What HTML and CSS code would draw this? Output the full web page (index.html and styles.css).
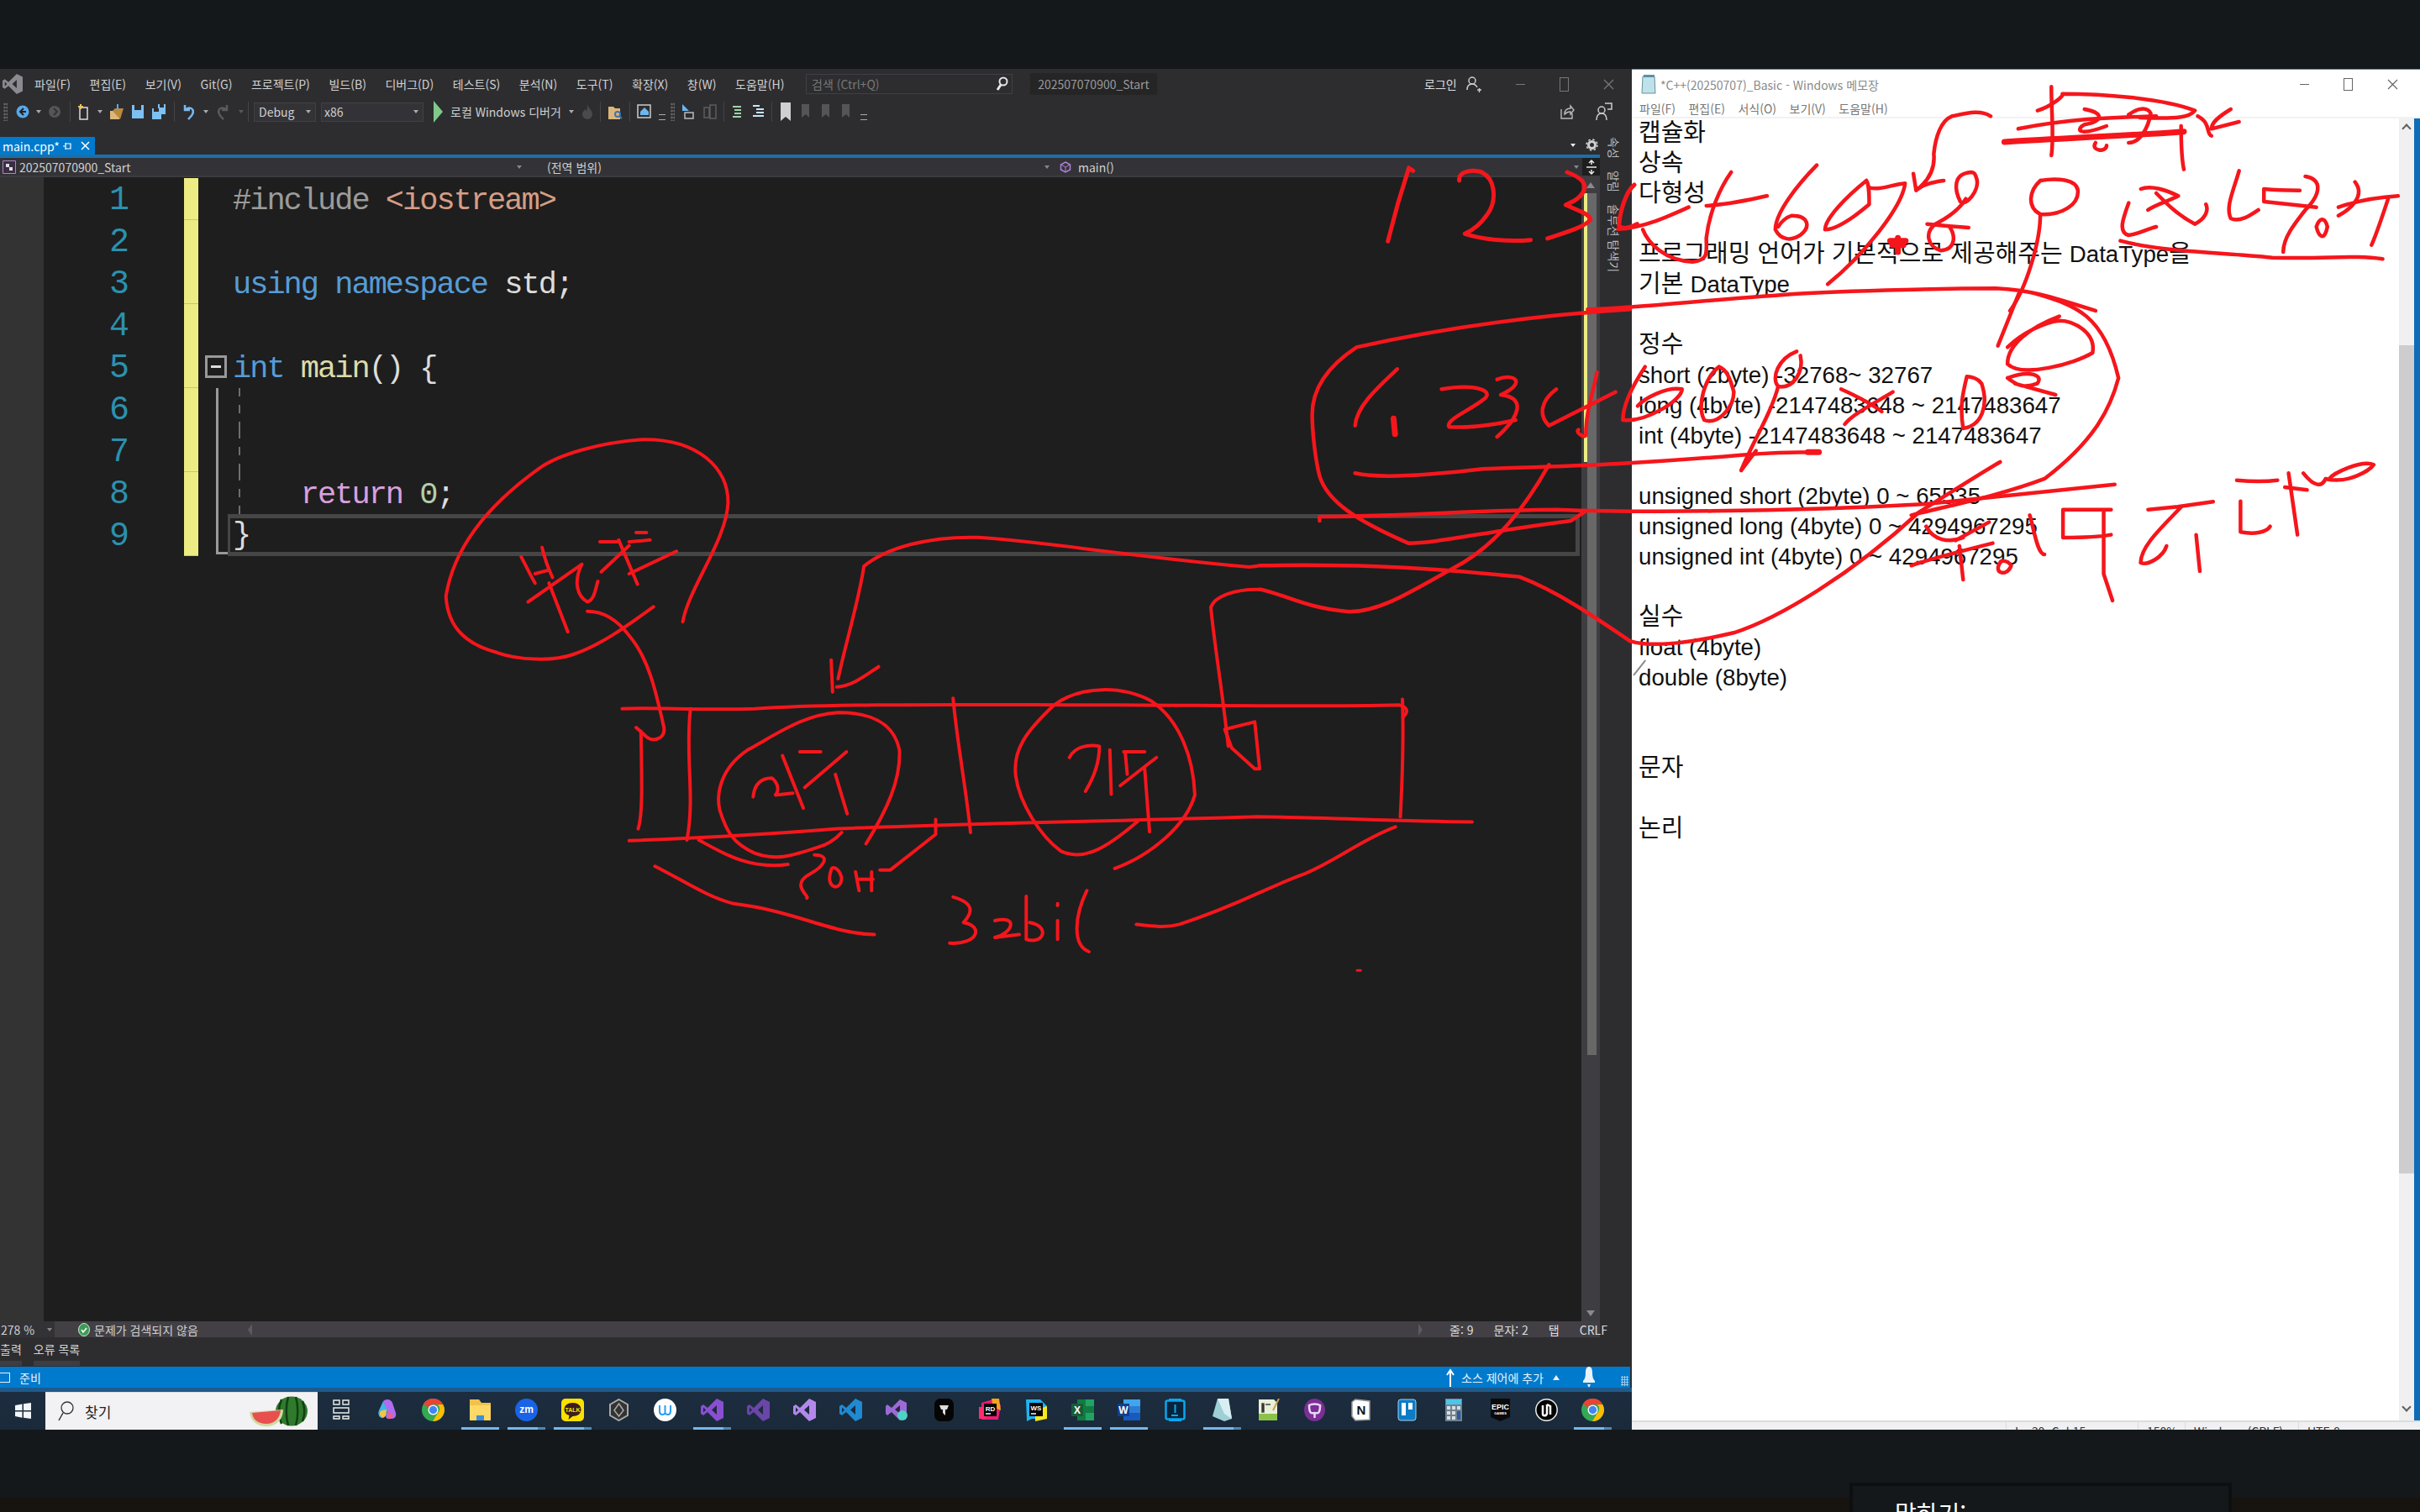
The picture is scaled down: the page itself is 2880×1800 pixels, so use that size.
FILE: index.html
```html
<!DOCTYPE html>
<html lang="ko">
<head>
    <meta charset="UTF-8">
    <title>main.cpp - 202507070900_Start</title>
    <link rel="stylesheet" href="styles.css">
</head>
<body>
    <svg width="0" height="0" class="defs">
        <symbol id="vs-logo" viewBox="0 0 27 27">
            <path d="M19 0 27 4v19l-8 4L8 16l-5 4-3-2V9l3-2 5 4zM19 8l-6 5.500 6 5.500zM3 10.500v6l3-3z" fill="currentColor"/>
        </symbol>
        <symbol id="chrome" viewBox="0 0 27 27">
            <circle cx="13.500" cy="13.500" r="13.500" fill="#34a853"/>
            <path d="M13.500 0A13.500 13.500 0 0 1 25.200 7H13.500a6.500 6.500 0 0 0-6 4L2 6A13.500 13.500 0 0 1 13.500 0" fill="#ea4335"/>
            <path d="M25.200 7A13.500 13.500 0 0 1 13 27l6-10a6.500 6.500 0 0 0 0-10z" fill="#fbbc05"/>
            <circle cx="13.500" cy="13.500" r="6" fill="#fff"/>
            <circle cx="13.500" cy="13.500" r="4.700" fill="#4285f4"/>
        </symbol>
    </svg>

    <div class="desktop">
        <!-- Visual Studio window + taskbar -->
        <div class="vs">
            <div class="vs-title">
                <svg class="vs-icon" width="24" height="24"><use href="#vs-logo"/></svg>
                <nav class="vs-menu">
                    <span>파일(F)</span><span>편집(E)</span><span>보기(V)</span><span>Git(G)</span><span>프로젝트(P)</span><span>빌드(B)</span><span>디버그(D)</span><span>테스트(S)</span><span>분석(N)</span><span>도구(T)</span><span>확장(X)</span><span>창(W)</span><span>도움말(H)</span>
                </nav>
                <div class="vs-search">
                    <span>검색 (Ctrl+Q)</span>
                    <svg width="16" height="18" viewBox="0 0 16 18"><circle cx="10" cy="6" r="4.500" fill="none" stroke="#e6e6e6" stroke-width="2"/><path d="M7 10 3 16" stroke="#e6e6e6" stroke-width="3"/></svg>
                </div>
                <div class="vs-solution">202507070900_Start</div>
                <div class="vs-login">
                    <span>로그인</span>
                    <svg width="18" height="20" viewBox="0 0 18 20"><circle cx="7" cy="6" r="4" fill="none" stroke="#ccc" stroke-width="1.500"/><path d="M1 17c0-4 2-7 6-7s5 2 6 4M13 17h5M15.500 15v5" fill="none" stroke="#ccc" stroke-width="1.500"/></svg>
                </div>
                <div class="win-buttons">
                    <span class="win-min"></span><span class="win-max"></span>
                    <svg width="13" height="13" viewBox="0 0 13 13"><path d="M1 1l11 11M12 1 1 12" stroke="#777" stroke-width="1.300"/></svg>
                </div>
            </div>

            <div class="vs-toolbar">
                <span class="grip"></span>
                <div class="tb-group nav-group">
                    <svg width="16" height="16" viewBox="0 0 16 16"><circle cx="8" cy="8" r="7.500" fill="#58a9e8"/><path d="M9 4 5 8l4 4M5 8h7" stroke="#222" stroke-width="2" fill="none"/></svg>
                    <i class="caret"></i>
                    <svg width="16" height="16" viewBox="0 0 16 16"><circle cx="8" cy="8" r="7" fill="#555"/><path d="M7 4l4 4-4 4" stroke="#333" stroke-width="2" fill="none"/></svg>
                </div>
                <span class="tb-sep"></span>
                <div class="tb-group file-group">
                    <svg width="16" height="20" viewBox="0 0 16 20"><path d="M3 5h9v14H3z" fill="none" stroke="#ddd" stroke-width="1.500"/><path d="M4 1v6M1 4h6" stroke="#e8c26a" stroke-width="2"/></svg>
                    <i class="caret"></i>
                    <svg width="18" height="20" viewBox="0 0 18 20"><path d="M1 9h11v10H1z" fill="#dcb67a"/><path d="M4 9l3-3h10l-4 13" fill="#b98a3e"/><path d="M10 7V1" stroke="#58a9e8" stroke-width="2"/></svg>
                    <svg width="16" height="18" viewBox="0 0 16 18"><path d="M1 1h14v16H1z" fill="#7dc0f2"/><path d="M4 1h8v6H4z" fill="#2d2d30"/></svg>
                    <svg width="18" height="20" viewBox="0 0 18 20"><path d="M1 6h11v13H1z" fill="#7dc0f2"/><path d="M8 1h9v12H8z" fill="#7dc0f2"/><path d="M10 1h5v4h-5zM3 6h6v4H3z" fill="#2d2d30"/></svg>
                </div>
                <span class="tb-sep"></span>
                <div class="tb-group undo-group">
                    <svg width="18" height="20" viewBox="0 0 18 20"><path d="M5 2v6h6M5 8c5-5 12-2 9 5-1 2-3 4-5 6" fill="none" stroke="#78b8ef" stroke-width="2.500"/></svg>
                    <i class="caret"></i>
                    <svg width="18" height="20" viewBox="0 0 18 20"><path d="M13 2v6H7M13 8C8 3 1 6 4 13c1 2 3 4 5 6" fill="none" stroke="#5a5a5c" stroke-width="2.500"/></svg>
                    <i class="caret dim"></i>
                </div>
                <span class="tb-sep"></span>
                <div class="combo combo-debug"><span>Debug</span><i class="caret"></i></div>
                <div class="combo combo-x86"><span>x86</span><i class="caret"></i></div>
                <div class="tb-group run-group">
                    <svg width="11" height="26" viewBox="0 0 11 26"><path d="M0 0 11 13 0 26z" fill="#7fc98a"/></svg>
                    <span class="run-label">로컬 Windows 디버거</span>
                    <i class="caret"></i>
                    <svg width="14" height="20" viewBox="0 0 14 20"><path d="M7 1c1 5 6 7 6 12a6 6 0 0 1-12 0c0-3 2-4 3-6 1 1 1 2 2 2 1-2 1-5 1-8" fill="#4a4a4c"/></svg>
                </div>
                <span class="tb-sep"></span>
                <div class="tb-group find-group">
                    <svg width="18" height="20" viewBox="0 0 18 20"><path d="M1 4h6l2 2h6v13H1z" fill="#dcb67a"/><circle cx="12" cy="13" r="3" fill="none" stroke="#3a76b0" stroke-width="2"/><path d="M14 15l3 3" stroke="#3a76b0" stroke-width="2"/></svg>
                </div>
                <span class="tb-sep"></span>
                <div class="tb-group home-group">
                    <svg width="18" height="20" viewBox="0 0 18 20"><path d="M1 2h15v15H1z" fill="none" stroke="#ccc" stroke-width="1.500"/><path d="M4 10l5-5 5 5v4H4z" fill="#6db5ee"/></svg>
                    <i class="lines"></i>
                </div>
                <span class="grip"></span>
                <div class="tb-group comment-group">
                    <svg width="16" height="20" viewBox="0 0 16 20"><path d="M1 1l8 8H1z" fill="#6db5ee"/><path d="M4 11h10v7H4z" fill="none" stroke="#bbb" stroke-width="1.500"/></svg>
                    <svg width="16" height="20" viewBox="0 0 16 20"><path d="M1 5h6v12H1zM8 2h7v16H8z" fill="none" stroke="#5c5c5e" stroke-width="1.500"/></svg>
                </div>
                <span class="tb-sep"></span>
                <div class="tb-group comment-group">
                    <svg width="14" height="18" viewBox="0 0 14 18"><path d="M2 3h10M4 7h8M4 11h8M2 15h10" stroke="#9fd3a8" stroke-width="2"/></svg>
                    <svg width="16" height="20" viewBox="0 0 16 20"><path d="M2 3h8M6 7h9M6 11h9M2 15h13" stroke="#c6e4f7" stroke-width="2"/></svg>
                </div>
                <span class="tb-sep"></span>
                <div class="tb-group bookmark-group">
                    <svg width="14" height="22" viewBox="0 0 14 22"><path d="M1 0h12v22l-6-5-6 5z" fill="#cfcfcf"/></svg>
                    <svg width="14" height="20" viewBox="0 0 14 20"><path d="M2 1h9v16l-4-4-5 4z" fill="#555"/></svg>
                    <svg width="14" height="20" viewBox="0 0 14 20"><path d="M2 1h9v16l-4-4-5 4z" fill="#555"/></svg>
                    <svg width="14" height="20" viewBox="0 0 14 20"><path d="M2 1h9v16l-4-4-5 4z" fill="#555"/></svg>
                    <i class="lines"></i>
                </div>
                <div class="tb-right">
                    <svg width="18" height="20" viewBox="0 0 18 20"><path d="M2 7v11h13v-6M6 13c0-5 3-7 7-7V3l4 5-4 5v-3c-3 0-5 1-7 3z" fill="none" stroke="#bbb" stroke-width="1.400"/></svg>
                    <svg width="20" height="22" viewBox="0 0 20 22"><circle cx="7" cy="9" r="4" fill="none" stroke="#ccc" stroke-width="1.500"/><path d="M1 21c0-5 2-8 6-8s6 3 6 8M11 1h8v7h-5" fill="none" stroke="#ccc" stroke-width="1.500"/></svg>
                </div>
            </div>

            <div class="workspace">
                <div class="docwell">
                    <div class="tabstrip">
                        <div class="doc-tab">
                            <span>main.cpp*</span>
                            <svg width="10" height="10" viewBox="0 0 10 10"><path d="M0 5h3M3 1v8M3 2h6v6H3" fill="none" stroke="#fff" stroke-width="1.200"/></svg>
                            <svg width="11" height="11" viewBox="0 0 11 11"><path d="M1 1l9 9M10 1l-9 9" stroke="#fff" stroke-width="1.500"/></svg>
                        </div>
                        <div class="tab-tools">
                            <i class="caret bright"></i>
                            <svg width="15" height="15" viewBox="0 0 15 15"><circle cx="7.500" cy="7.500" r="4" fill="none" stroke="#d0d0d0" stroke-width="3"/><circle cx="7.500" cy="7.500" r="6.500" fill="none" stroke="#d0d0d0" stroke-width="1.500" stroke-dasharray="2.500 2.600"/></svg>
                        </div>
                    </div>
                    <div class="tab-line"></div>
                    <div class="navbar">
                        <div class="nav-combo nav-project">
                            <svg width="16" height="16" viewBox="0 0 16 16"><path d="M.5.5h15v15H.5z" fill="#3b2b44" stroke="#a988c0"/><path d="M4 4h4v4H4zM8 8h4v4H8z" fill="#ddd"/></svg>
                            <span>202507070900_Start</span><i class="caret small"></i>
                        </div>
                        <div class="nav-combo nav-scope"><span>(전역 범위)</span><i class="caret small"></i></div>
                        <div class="nav-combo nav-member">
                            <svg width="14" height="14" viewBox="0 0 14 14"><path d="M7 1l5.500 3v6L7 13l-5.500-3V4z" fill="none" stroke="#b180d7" stroke-width="1.500"/><path d="M2 4l5 3 5-3M7 7v6" fill="none" stroke="#b180d7"/></svg>
                            <span>main()</span><i class="caret small"></i>
                        </div>
                        <div class="splitter"><svg width="14" height="18" viewBox="0 0 14 18"><path d="M1 9h12M7 1v5M7 12v5M4 4l3-3 3 3M4 14l3 3 3-3" fill="none" stroke="#e6e6e6" stroke-width="1.500"/></svg></div>
                    </div>

                    <div class="editor">
                        <div class="margin"></div>
                        <div class="code">
                            <div class="row"><span class="num">1</span><span class="mark"></span><span class="fold"></span><pre class="text"><span class="c-dir">#include</span> <span class="c-str">&lt;iostream&gt;</span></pre></div>
                            <div class="row"><span class="num">2</span><span class="mark even"></span><span class="fold"></span><pre class="text"></pre></div>
                            <div class="row"><span class="num">3</span><span class="mark"></span><span class="fold"></span><pre class="text"><span class="c-key">using namespace</span> std;</pre></div>
                            <div class="row"><span class="num">4</span><span class="mark even"></span><span class="fold"></span><pre class="text"></pre></div>
                            <div class="row"><span class="num">5</span><span class="mark"></span><span class="fold"><i class="fold-box"></i></span><pre class="text"><span class="c-key">int</span> <span class="c-fn">main</span>() {</pre></div>
                            <div class="row"><span class="num">6</span><span class="mark even"></span><span class="fold fold-line"></span><pre class="text guide"></pre></div>
                            <div class="row"><span class="num">7</span><span class="mark"></span><span class="fold fold-line"></span><pre class="text guide"></pre></div>
                            <div class="row"><span class="num">8</span><span class="mark even"></span><span class="fold fold-line"></span><pre class="text guide">    <span class="c-ret">return</span> <span class="c-num">0</span>;</pre></div>
                            <div class="row"><span class="num">9</span><span class="mark"></span><span class="fold fold-end"></span><pre class="text current">}</pre></div>
                        </div>
                        <div class="scrollbar">
                            <i class="arrow-up"></i>
                            <div class="scroll-track"><div class="scroll-changes"></div><div class="scroll-thumb"></div></div>
                            <i class="arrow-down"></i>
                        </div>
                    </div>

                    <div class="editor-status">
                        <div class="zoom-box"><span>278 %</span><i class="caret bright small"></i></div>
                        <svg width="14" height="16" viewBox="0 0 14 16"><ellipse cx="7" cy="8" rx="6.500" ry="7.500" fill="#3d9a55" stroke="#cfe7d4"/><path d="M4 8l2 3 4-5" fill="none" stroke="#fff" stroke-width="1.600"/></svg>
                        <span class="no-issues">문제가 검색되지 않음</span>
                        <i class="arrow-left"></i>
                        <i class="arrow-right"></i>
                        <div class="caret-info"><span>줄: 9</span><span>문자: 2</span><span>탭</span><span>CRLF</span></div>
                    </div>
                    <div class="bottom-tabs"><span>출력</span><span>오류 목록</span></div>
                </div>
                <div class="sidetabs"><span>속성</span><span>알림</span><span>솔루션 탐색기</span></div>
            </div>

            <div class="statusbar">
                <i class="ready-box"></i><span class="ready">준비</span>
                <div class="status-right">
                    <svg width="10" height="22" viewBox="0 0 10 22"><path d="M5 22V3M1 8l4-6 4 6" fill="none" stroke="#fff" stroke-width="2"/></svg>
                    <span>소스 제어에 추가</span>
                    <i class="caret-up"></i>
                    <svg class="bell" width="16" height="26" viewBox="0 0 16 26"><path d="M8 0c3 0 4 3 4 7 0 5 1 8 3 10v2H1v-2c2-2 3-5 3-10 0-4 1-7 4-7zM6 21h4l-2 4z" fill="#e8f2fa"/></svg>
                    <i class="resize-grip"></i>
                </div>
            </div>
            <div class="status-strip"></div>

            <div class="taskbar">
                <svg class="start" width="19" height="19" viewBox="0 0 19 19"><path d="M0 3l8.500-1.500V9H0zM10 1.200 19 0v9h-9zM0 10.500h8.500v7.200L0 16zM10 10.500h9V19l-9-1.300z" fill="#f2f6fa"/></svg>
                <div class="search-box">
                    <svg width="20" height="26" viewBox="0 0 20 26"><circle cx="12" cy="9" r="7" fill="none" stroke="#333" stroke-width="1.300"/><path d="M7 15 2 24" stroke="#333" stroke-width="1.500"/></svg>
                    <span>찾기</span>
                    <svg class="melon" width="70" height="36" viewBox="0 0 70 36">
                        <ellipse cx="50" cy="18" rx="19" ry="17.500" fill="#2f7a2c"/>
                        <path d="M38 4c-4 10-4 20 0 29M46 1c-3 10-3 24 0 34M55 1c3 10 3 24 0 34M63 6c3 8 3 16 0 24" fill="none" stroke="#123f14" stroke-width="2.500"/>
                        <path d="M0 19 40 16c0 12-8 20-20 20C8 36 1 29 0 19z" fill="#cfd9a0"/>
                        <path d="M3 20 37 17c-1 10-8 16-17 16C10 33 4 28 3 20z" fill="#e8504f"/>
                    </svg>
                </div>
                <div class="task-icons">
                    <span class="task-icon"><svg width="20" height="24" viewBox="0 0 20 24"><path d="M1 1h7v5H1zM12 1h7v5h-7zM1 10h18v6H1zM1 20h7v3H1zM12 20h7v3h-7z" fill="none" stroke="#eee" stroke-width="1.400"/></svg></span>
                    <span class="task-icon"><svg width="27" height="27" viewBox="0 0 27 27"><path d="M9 3c3-3 9-3 11 2l4 12c1 4-1 7-5 7h-4c-4 0-3-6-1-8z" fill="#b06cf0"/><path d="M9 3 4 14c-2 5 1 10 5 9 3-1 4-5 5-9z" fill="#3fb6e8"/><path d="M5 16c2-2 5-3 8-2l-1 6c-1 3-6 3-7-1z" fill="#f6c344"/><path d="M15 16l5 2c1 4-1 7-5 6z" fill="#ee5f8a"/></svg></span>
                    <span class="task-icon"><svg width="27" height="27"><use href="#chrome"/></svg></span>
                    <span class="task-icon open"><svg width="27" height="27" viewBox="0 0 27 27"><path d="M1 1h11l3 4h11v21H1z" fill="#f3c14b"/><path d="M1 8h25v18H1z" fill="#ffd966"/><path d="M9 26v-6h9v6z" fill="#3d8fdb"/></svg></span>
                    <span class="task-icon open part"><svg width="27" height="27" viewBox="0 0 27 27"><ellipse cx="13.500" cy="13.500" rx="13.500" ry="13.500" fill="#1a63e8"/><text x="13.500" y="17" class="ico-txt" font-size="12" fill="#fff">zm</text></svg></span>
                    <span class="task-icon open part"><svg width="27" height="27" viewBox="0 0 27 27"><rect width="27" height="27" rx="5" fill="#fae100"/><path d="M13.500 5c6 0 10 3 10 8s-4 8-10 8l-5 4 1-5c-4-1-6-4-6-7 0-5 4-8 10-8z" fill="#3c1e1e"/><text x="13.500" y="16" class="ico-txt" font-size="7" fill="#fae100">TALK</text></svg></span>
                    <span class="task-icon"><svg width="27" height="27" viewBox="0 0 27 27"><path d="M13.500 1 24 7v13l-10.500 6L3 20V7z" fill="#333" stroke="#aaa" stroke-width="2"/><path d="M13.500 6 19 14l-5.500 7L8 14z" fill="none" stroke="#aaa" stroke-width="1.500"/></svg></span>
                    <span class="task-icon"><svg width="27" height="27" viewBox="0 0 27 27"><circle cx="13.500" cy="13.500" r="13.500" fill="#fff"/><path d="M7 8v7c0 5 5 5 6.500 2 1.500 3 6.500 3 6.500-2V8M13.500 8v8" fill="none" stroke="#2a9df4" stroke-width="2"/></svg></span>
                    <span class="task-icon open part vs-purple"><svg width="27" height="27"><use href="#vs-logo"/></svg></span>
                    <span class="task-icon vs-dark"><svg width="27" height="27"><use href="#vs-logo"/></svg></span>
                    <span class="task-icon vs-light"><svg width="27" height="27"><use href="#vs-logo"/></svg></span>
                    <span class="task-icon vs-blue"><svg width="27" height="27"><use href="#vs-logo"/></svg></span>
                    <span class="task-icon"><svg width="27" height="27" viewBox="0 0 27 27"><path d="M17 1l8 4v17l-8 4-10-10-5 4-2-2V9l2-2 5 4z" fill="#9c6ad6"/><path d="M17 8l-6 5 6 5z" fill="#2d2240"/><circle cx="20" cy="20" r="6" fill="#4fd1c5"/></svg></span>
                    <span class="task-icon"><svg width="23" height="27" viewBox="0 0 23 27"><rect width="23" height="27" rx="7" fill="#050505"/><path d="M6 8h11l-2 5h-2v7l-3-3v-4H8z" fill="#ddd"/></svg></span>
                    <span class="task-icon"><svg width="27" height="27" viewBox="0 0 27 27"><path d="M3 5 20 0l6 8-3 17H3z" fill="#ec1c75"/><path d="M15 0h9l2 14-9-4z" fill="#f7a41c"/><path d="M0 10h8v14H0z" fill="#ff2d6f"/><rect x="6" y="6" width="15" height="15" fill="#000"/><text x="13.500" y="15" class="ico-txt" font-size="8" fill="#fff">RD</text><path d="M8 18h6" stroke="#fff" stroke-width="1.500"/></svg></span>
                    <span class="task-icon"><svg width="27" height="27" viewBox="0 0 27 27"><path d="M1 1h17l8 8v15H8L2 27z" fill="#1eb4f0"/><path d="M12 14 26 9v15l-14 3z" fill="#f7e81c"/><rect x="5" y="5" width="16" height="16" fill="#000"/><text x="13" y="14" class="ico-txt" font-size="8" fill="#fff">WS</text><path d="M7 18h6" stroke="#fff" stroke-width="1.500"/></svg></span>
                    <span class="task-icon open"><svg width="27" height="27" viewBox="0 0 27 27"><path d="M7 1h20v25H7z" fill="#107c41"/><path d="M17 1h10v8H17zM17 17h10v9H17z" fill="#21a366"/><rect y="6" width="14" height="15" fill="#185c37"/><text x="7" y="18" class="ico-txt" font-size="12" fill="#fff">X</text></svg></span>
                    <span class="task-icon open"><svg width="27" height="27" viewBox="0 0 27 27"><path d="M7 1h20v25H7z" fill="#185abd"/><path d="M7 1h20v8H7z" fill="#41a5ee"/><path d="M7 9h20v8H7z" fill="#2b7cd3"/><rect y="6" width="14" height="15" fill="#103f91"/><text x="7" y="18" class="ico-txt" font-size="12" fill="#fff">W</text></svg></span>
                    <span class="task-icon"><svg width="25" height="27" viewBox="0 0 25 27"><rect x="1.500" y="2.500" width="22" height="22" rx="2" fill="#06243a" stroke="#0ca5ee" stroke-width="2.500"/><path d="M5 0h15v2H5zM5 25h15v2H5z" fill="#0ca5ee"/><path d="M12.500 7v10M8 20h8" stroke="#0ca5ee" stroke-width="2"/></svg></span>
                    <span class="task-icon open part"><svg width="27" height="27" viewBox="0 0 27 27"><path d="M8 0h13l4 24-9 3-14-6z" fill="#9fcfd6"/><path d="M8 0h13l4 24-9-6z" fill="#d9eef2"/></svg></span>
                    <span class="task-icon"><svg width="27" height="27" viewBox="0 0 27 27"><path d="M2 1h18l4 4v21H2z" fill="#e9f0d8"/><path d="M2 18h22v8H2z" fill="#8bc34a"/><path d="M6 6h2v10H6zM10 7h6" stroke="#444" stroke-width="1.500"/><path d="M26 0 19 14" stroke="#c9a24c" stroke-width="2"/></svg></span>
                    <span class="task-icon"><svg width="25" height="27" viewBox="0 0 25 27"><ellipse cx="12.500" cy="13.500" rx="12.500" ry="13.500" fill="#7b2e96"/><path d="M6 8c0 12 4 9 6.500 9S19 20 19 8c-3-2-10-2-13 0zM12.500 17v6" fill="none" stroke="#e9d8f2" stroke-width="2.500"/></svg></span>
                    <span class="task-icon"><svg width="23" height="27" viewBox="0 0 23 27"><path d="M5 1 22 3v22L5 26 1 21V4z" fill="#fff" stroke="#999" stroke-width="1.500"/><text x="12" y="19" class="ico-txt" font-size="15" fill="#111">N</text></svg></span>
                    <span class="task-icon"><svg width="23" height="27" viewBox="0 0 23 27"><rect x="1" y="1" width="21" height="25" rx="3" fill="#0c7cc4" stroke="#9fd1ef"/><path d="M5 5h5v15H5zM13 5h5v8h-5z" fill="#fff"/></svg></span>
                    <span class="task-icon"><svg width="20" height="27" viewBox="0 0 20 27"><rect width="20" height="27" fill="#71818f"/><rect x="1" y="1" width="18" height="6" fill="#4fc3e8"/><path d="M2 9h4v4H2zM8 9h4v4H8zM14 9h4v4h-4zM2 15h4v4H2zM8 15h4v4H8zM2 21h4v4H2zM8 21h4v4H8z" fill="#d8dee3"/><path d="M14 15h4v10h-4z" fill="#2a5b9c"/></svg></span>
                    <span class="task-icon"><svg width="23" height="27" viewBox="0 0 23 27"><path d="M0 0h23v22l-11.500 5L0 22z" fill="#0a0a0a"/><text x="11.500" y="13" class="ico-txt" font-size="9" fill="#fff">EPIC</text><text x="11.500" y="19" class="ico-txt" font-size="4" fill="#fff">GAMES</text></svg></span>
                    <span class="task-icon"><svg width="27" height="27" viewBox="0 0 27 27"><circle cx="13.500" cy="13.500" r="12.700" fill="#000" stroke="#eee" stroke-width="1.500"/><path d="M9 8v10c0 3 4 3 5 0V7M14 7l4 2v10" fill="none" stroke="#fff" stroke-width="2.500"/></svg></span>
                    <span class="task-icon open part"><svg width="27" height="27"><use href="#chrome"/></svg></span>
                </div>
            </div>
        </div>

        <!-- Notepad -->
        <div class="notepad">
            <div class="np-title">
                <svg width="20" height="26" viewBox="0 0 20 26"><path d="M3 3h14l1 20H2z" fill="#bfe1ea" stroke="#6a8f99"/><path d="M4 1h13v3H4z" fill="#5c8fa8"/></svg>
                <span class="np-name">*C++(20250707)_Basic - Windows 메모장</span>
                <div class="np-buttons">
                    <span class="np-min"></span><span class="np-max"></span>
                    <svg width="13" height="13" viewBox="0 0 13 13"><path d="M1 1l11 11M12 1 1 12" stroke="#666" stroke-width="1.200"/></svg>
                </div>
            </div>
            <nav class="np-menu"><span>파일(F)</span><span>편집(E)</span><span>서식(O)</span><span>보기(V)</span><span>도움말(H)</span></nav>
            <div class="np-body">
                <pre class="np-text"><span class="ko">캡슐화</span>
<span class="ko">상속</span>
<span class="ko">다형성</span>

<span class="ko">프로그래밍 언어가 기본적으로 제공해주는 </span>DataType<span class="ko">을</span>
<span class="ko">기본 </span>DataType

<span class="ko">정수</span>
short (2byte) -32768~ 32767
long (4byte) -2147483648 ~ 2147483647
int (4byte) -2147483648 ~ 2147483647

unsigned short (2byte) 0 ~ 65535
unsigned long (4byte) 0 ~ 4294967295
unsigned int (4byte) 0 ~ 4294967295

<span class="ko">실수</span>
float (4byte)
double (8byte)


<span class="ko">문자</span>

<span class="ko">논리</span></pre>
                <div class="np-scroll">
                    <i class="np-up"></i>
                    <div class="np-thumb"></div>
                    <i class="np-down"></i>
                </div>
                <div class="np-edge"></div>
            </div>
            <div class="np-status"><span class="np-pos">Ln 29, Col 15</span><span class="np-zoom">150%</span><span class="np-eol">Windows (CRLF)</span><span class="np-enc">UTF-8</span></div>
        </div>
    </div>

    <div class="caption-area">
        <div class="speak-box">말하기:</div>
    </div>

    <!-- red pen annotations over the screen -->
    <svg class="ink" width="2880" height="1800" viewBox="0 0 2880 1800">
        <g class="pen-wide" transform="translate(1620 170) scale(.3333)">
            <path d="M185 100 170 90 130 220 95 352"/>
            <path d="M350 135C345 100 400 95 430 105 480 130 480 200 460 240 430 290 400 310 370 325 430 345 530 355 605 347"/>
            <path d="M735 105C790 125 810 150 790 180 770 210 740 215 730 222 770 240 820 255 818 275 800 300 730 320 665 342"/>
            <path d="M975 150C945 175 925 240 920 295 930 310 960 305 985 290"/>
        </g>
        <g class="pen-mid" transform="translate(1850 70) scale(.657 .3333)">
            <path d="M115 608C160 605 210 560 243 530"/>
            <path d="M160 610C170 660 200 720 250 725 280 720 275 690 275 640 280 550 300 460 320 405"/>
            <path d="M275 525C320 520 360 500 385 490"/>
            <path d="M475 380C440 450 400 550 400 610 410 650 430 650 445 630 465 600 460 560 430 560 420 565 410 585 405 600"/>
            <path d="M565 435C530 490 490 570 490 610 510 610 540 570 570 520 570 480 570 450 565 435"/>
            <path d="M570 460C590 470 610 450 635 445 630 530 560 700 495 805"/>
            <path d="M790 205C770 180 745 195 720 205 700 220 690 280 687 340 690 400 675 440 655 470L650 410M655 470C670 445 690 440 705 435"/>
            <path d="M755 405C720 410 725 470 735 510 745 530 770 470 765 430 762 410 760 405 755 405"/>
            <path d="M745 500C730 550 700 580 690 590 670 620 675 670 700 685 730 680 725 620 715 600M675 590C700 595 730 600 750 603"/>
            <path d="M880 435C860 470 855 530 880 555 920 560 950 520 948 470 945 430 910 425 880 435"/>
            <path d="M880 555C880 650 855 820 825 900"/>
            <path class="thick" d="M622 640 622 690M608 650 636 650M612 665 632 665"/>
            <path d="M1062 465C1080 450 1110 470 1130 490 1110 510 1090 520 1075 540"/>
            <path d="M1040 515C1030 570 1020 620 1040 630 1060 625 1070 610 1090 600"/>
            <path d="M1090 480C1110 520 1130 560 1160 590 1180 570 1185 540 1180 520"/>
            <path d="M1240 400C1230 470 1215 530 1225 570 1240 585 1260 560 1275 540"/>
            <path d="M1285 465C1310 470 1330 470 1350 470M1285 465 1285 510 1380 530"/>
            <path d="M1360 420C1390 430 1390 480 1360 540 1340 590 1320 640 1320 690"/>
            <path d="M1380 600C1385 640 1395 650 1400 600 1395 560 1385 570 1380 600"/>
            <path d="M1450 440C1470 490 1440 540 1420 560M1420 530C1450 510 1490 495 1528 490M1510 500C1500 560 1490 620 1480 665"/>
            <path d="M1025 650C1100 690 1200 690 1300 710 1400 715 1450 700 1500 715"/>
            <path d="M900 100C900 200 905 280 900 345"/>
            <path d="M875 185C900 170 925 130 920 125 990 125 1100 140 1160 185 1150 210 1130 215 1060 210"/>
            <path d="M960 180C990 190 1000 220 960 235 945 250 945 280 1000 240"/>
            <path class="thick" d="M815 297C900 285 1000 280 1140 260"/>
            <path d="M840 250C930 215 1000 210 1090 205"/>
            <path d="M1040 200C1060 170 1075 175 1080 195 1075 250 1060 300 1040 300"/>
            <path d="M1165 205C1190 230 1180 270 1190 275M1225 180C1200 210 1190 230 1190 250L1240 225"/>
            <path d="M1135 240C1135 300 1135 350 1140 395"/>
            <path d="M980 300C970 330 1000 335 1000 310"/>
            <path d="M60 895C150 890 280 860 400 845 500 830 700 820 800 820 860 825 900 850 980 900"/>
        </g>
        <g class="pen-mid" transform="translate(1500 350) scale(.8803 .3333)">
            <path d="M185 268C160 330 130 400 128 470"/>
            <path class="thick" d="M180 445 182 500"/>
            <path d="M245 340C290 320 320 345 300 380 280 420 250 450 255 475 290 480 320 465 345 450"/>
            <path d="M320 305C345 280 360 320 325 360 360 370 350 440 320 510"/>
            <path d="M400 340C380 380 375 430 390 470L480 350M455 280C450 350 440 420 440 500 440 520 425 495 430 485"/>
            <path d="M520 260C500 340 490 400 490 450 520 460 570 380 570 340 550 330 520 370 510 400"/>
            <path d="M620 260C600 300 590 400 600 450 620 470 640 400 640 350 635 300 630 270 620 260"/>
            <path d="M725 205C700 230 690 300 700 330 720 340 735 280 730 220"/>
            <path d="M700 330C690 430 665 530 650 630"/>
            <path d="M785 340C810 370 830 400 840 420M855 350C830 390 800 430 790 465"/>
            <path d="M955 295C950 350 945 400 950 480 975 470 985 400 975 320 970 300 960 295 955 295"/>
            <path d="M1025 0 997 185"/>
            <path d="M1080 80C1040 120 1010 180 1010 250 1030 300 1100 250 1125 210 1130 140 1100 95 1080 95 1060 100 1030 140 1010 190"/>
            <path d="M1010 300C1040 270 1060 290 1050 320 1030 340 1020 320 1010 300M1020 320 1075 360"/>
            <path d="M128 640C160 660 220 650 300 625 400 615 500 610 650 575 700 565 730 565 755 565"/>
            <path class="thick" d="M740 565 755 565"/>
            <path d="M650 630 670 560"/>
            <path d="M500 55C440 65 300 90 130 190 90 260 70 340 70 430 70 500 75 600 80 650 90 740 130 810 200 890 240 890 300 850 420 810L440 775"/>
            <path d="M1050 0C1100 40 1140 70 1160 300 1150 400 1130 520 1060 660 1000 720 940 750 880 790"/>
            <path d="M80 810V795C200 795 300 770 400 770 500 780 700 780 900 750L1155 680"/>
            <path d="M0 970C100 965 200 970 350 1010 400 1060 450 1150 500 1240 520 1255 560 1260 640 1210 700 1160 800 1000 890 780 950 680 980 630 1000 600"/>
            <path d="M390 610C360 750 320 900 260 980 200 1070 160 1135 120 1135 60 1120 40 1080 0 1055"/>
            <path d="M900 830C910 880 930 890 950 870M985 815 940 880M880 970C900 950 930 930 990 890M945 900 950 1020"/>
            <path d="M1000 960C990 1000 1010 1010 1015 970 1010 950 1000 950 1000 960"/>
            <path d="M1040 790C1045 830 1050 930 1060 930M1085 770V870C1100 870 1130 870 1150 860M1085 770H1150M1140 770V1000L1152 1095"/>
            <path d="M1200 770 1240 760 1288 742M1245 760C1220 830 1190 900 1190 960 1200 970 1220 940 1225 900M1265 860 1270 990"/>
            <path d="M1320 665C1340 670 1360 670 1375 665M1325 740V850C1345 860 1360 850 1365 830"/>
            <path d="M1390 640 1402 860M1385 690 1415 700"/>
            <path d="M1410 640C1425 690 1435 690 1440 660 1470 680 1500 630 1505 610 1490 590 1450 640 1445 660"/>
            <path class="pencil" d="M520 1310 505 1360"/>
        </g>
        <g transform="translate(500 500) scale(.8291 .4464)">
            <path d="M377 538C385 450 440 320 442 220 442 130 400 50 320 52 260 60 200 90 170 130 110 210 50 320 37 470 40 560 70 600 110 620 140 640 190 645 220 625 260 600 300 545 335 498"/>
            <path d="M145 365C155 400 160 420 165 435M175 340C180 380 185 400 190 420M165 410 185 400M155 485 232 385M185 435 212 565"/>
            <path d="M232 385C220 430 225 470 240 485 250 480 252 450 255 430M258 325H285M260 405 300 335M285 320 312 438M310 300H325M330 320 300 325M300 410 368 350"/>
            <path d="M240 510C270 510 290 550 300 575 330 640 340 740 350 820 352 850 335 860 325 845L310 820"/>
            <path d="M290 770C330 765 400 775 480 770 600 755 800 760 1000 760 1200 762 1300 765 1405 760 1415 765 1420 775 1412 790"/>
            <path d="M300 1122C400 1115 500 1105 600 1090 800 1075 1100 1065 1200 1058 1300 1060 1400 1070 1510 1072"/>
            <path d="M317 830C318 950 320 1050 313 1090M388 770C380 900 395 1000 383 1120M765 742C770 850 785 1000 790 1100M1410 745C1412 850 1410 950 1407 1058"/>
            <path d="M640 1130C670 1040 690 960 688 880 680 810 650 780 600 780 550 785 510 840 470 880 430 930 425 1000 430 1040 440 1100 450 1130 480 1155 510 1175 530 1165 570 1140 590 1130 600 1110 605 1100"/>
            <path d="M478 1005C480 970 490 955 505 955 515 970 515 990 510 1000L535 995M520 895 550 1035M545 885H575M552 980 612 885M596 945 613 1050"/>
            <path d="M997 1196C1050 1160 1100 1080 1112 1000 1110 900 1090 800 1050 750 1010 710 950 705 910 760 870 830 850 880 855 950 860 1020 890 1110 920 1150 950 1175 980 1150 1030 1070"/>
            <path d="M932 900C940 870 960 865 975 870 975 920 965 960 955 990M990 880 992 998M1012 885 1015 945M1010 885H1040M1005 975 1057 900M1040 930 1047 1098"/>
            <path d="M592 725 590 640M598 712C620 710 640 680 658 658"/>
            <path d="M600 690C610 600 630 480 637 390 670 340 730 310 800 313 880 320 1000 360 1190 392 1195 392 1200 390 1206 388"/>
            <path d="M1160 870C1150 700 1140 600 1135 500 1140 470 1170 450 1206 452"/>
            <path d="M1155 825 1165 875 1198 930H1205L1198 805z"/>
            <path d="M400 1120C430 1150 470 1200 528 1185M740 1065V1105L675 1200H660"/>
            <path d="M566 1160C590 1160 580 1190 560 1210 530 1240 560 1270 555 1275M590 1200C580 1250 605 1260 605 1220 600 1190 590 1190 590 1200M625 1205 630 1255M648 1205V1255M630 1225H650"/>
            <path d="M337 1190C380 1230 410 1270 450 1290 540 1310 590 1370 652 1372"/>
            <path d="M765 1272C800 1290 790 1320 780 1340 810 1350 800 1400 760 1395M825 1335C860 1320 850 1370 825 1380L860 1372"/>
            <path d="M870 1270V1385C895 1400 905 1350 875 1340M915 1335V1385M915 1290V1295M957 1255C940 1320 935 1400 960 1418"/>
            <path d="M1028 1345C1050 1350 1070 1355 1090 1345 1180 1290 1210 1250 1270 1210 1320 1170 1350 1120 1400 1085"/>
            <path class="dot" d="M1345 1468 1350 1468"/>
        </g>
    </svg>
</body>
</html>
```

FILE: styles.css
```css
/* Page */
html, body {
    margin: 0;
    padding: 0;
    width: 2880px;
    height: 1800px;
    overflow: hidden;
    background: #14181b;
    font-family: "Noto Sans CJK KR", "Liberation Sans", sans-serif;
}

body {
    position: relative;
    padding-top: 82px;
    box-sizing: border-box;
}

i {
    display: block;
    font-style: normal;
}

svg {
    display: block;
    flex: none;
}

.defs {
    position: absolute;
}

.desktop {
    display: flex;
    height: 1620px;
}

/* Visual Studio */
.vs {
    width: 1942px;
    display: flex;
    flex-direction: column;
    flex: none;
    background: #2d2d30;
    color: #d0d0d0;
    font-size: 14px;
}

.vs-title {
    height: 36px;
    display: flex;
    align-items: center;
    flex: none;
}

.vs-icon {
    color: #8a8a90;
    margin-left: 3px;
    margin-right: 14px;
}

.vs-menu {
    display: flex;
    gap: 22.600px;
    width: 918px;
    flex: none;
    white-space: nowrap;
}

.vs-search {
    width: 246px;
    height: 24px;
    box-sizing: border-box;
    border: 1px solid #3f3f46;
    display: flex;
    align-items: center;
    justify-content: space-between;
    padding: 0 4px 0 6px;
    color: #777;
    flex: none;
}

.vs-solution {
    margin-left: 21px;
    width: 151px;
    height: 26px;
    line-height: 26px;
    text-align: center;
    background: #252526;
    color: #999;
    flex: none;
}

.vs-login {
    display: flex;
    align-items: center;
    gap: 11px;
    margin-left: 318px;
    color: #ddd;
    flex: none;
}

.win-buttons {
    display: flex;
    align-items: center;
    gap: 41px;
    margin-left: 41px;
}

.win-min {
    width: 11px;
    height: 1px;
    background: #777;
}

.win-max {
    width: 11px;
    height: 17px;
    box-sizing: border-box;
    border: 1px solid #777;
}

.vs-toolbar {
    height: 30px;
    display: flex;
    align-items: center;
    flex: none;
    padding-left: 4px;
    position: relative;
}

.grip {
    width: 5px;
    height: 22px;
    background-image: radial-gradient(#666 1px, transparent 1.200px);
    background-size: 3px 4px;
    flex: none;
}

.tb-group {
    display: flex;
    align-items: center;
    flex: none;
}

.tb-sep {
    width: 1px;
    height: 24px;
    background: #444;
    flex: none;
}

.nav-group {
    gap: 8px;
    margin: 0 10px 0 10px;
}

.file-group {
    gap: 8px;
    margin: 0 9px 0 8px;
}

.undo-group {
    gap: 9px;
    margin: 0 5px 0 7px;
}

.run-group {
    gap: 9px;
    margin: 0 8px 0 12px;
}

.run-label {
    font-size: 14px;
    width: 132px;
    white-space: nowrap;
}

.find-group {
    margin: 0 8px;
}

.home-group {
    gap: 8px;
    margin: 0 6px 0 8px;
}

.comment-group {
    gap: 10px;
    margin: 0 8px;
}

.bookmark-group {
    gap: 10px;
    margin-left: 9px;
}

.tb-right {
    display: flex;
    gap: 25px;
    align-items: center;
    position: absolute;
    right: 23px;
}

.caret {
    width: 0;
    height: 0;
    border: 3px solid transparent;
    border-top: 4px solid #aaa;
    border-bottom: 0;
    flex: none;
}

.caret.dim {
    border-top-color: #5a5a5c;
}

.caret.bright {
    border-top-color: #eee;
}

.caret.small {
    border-top-color: #888;
}

.lines {
    width: 8px;
    height: 7px;
    margin-top: 12px;
    border-top: 1px solid #aaa;
    border-bottom: 1px solid #aaa;
    box-sizing: border-box;
}

.combo {
    height: 23px;
    box-sizing: border-box;
    border: 1px solid #3f3f46;
    background: #333337;
    display: flex;
    align-items: center;
    justify-content: space-between;
    padding: 0 5px;
    flex: none;
    font-size: 14px;
}

.combo-debug {
    width: 74px;
    margin-left: 6px;
}

.combo-x86 {
    width: 122px;
    margin-left: 6px;
    padding-left: 3px;
}

/* Document well */
.workspace {
    flex: 1;
    display: flex;
    min-height: 0;
}

.docwell {
    width: 1904px;
    display: flex;
    flex-direction: column;
}

.tabstrip {
    height: 36px;
    display: flex;
    align-items: flex-end;
    justify-content: space-between;
    flex: none;
}

.doc-tab {
    width: 113px;
    height: 21px;
    box-sizing: border-box;
    background: #007acc;
    color: #fff;
    display: flex;
    align-items: center;
    padding-left: 3px;
    font-size: 14px;
}

.doc-tab span {
    width: 72px;
}

.doc-tab svg:last-child {
    margin-left: 11px;
}

.tab-tools {
    display: flex;
    align-items: center;
    gap: 12px;
    padding: 0 2px 4px 0;
}

.tab-line {
    height: 4px;
    background: #1c6fa8;
    flex: none;
}

.navbar {
    height: 23px;
    display: flex;
    background: #333337;
    flex: none;
    border-bottom: 2px solid #3c3c40;
    box-sizing: border-box;
    font-size: 14px;
}

.nav-combo {
    display: flex;
    align-items: center;
    gap: 4px;
    position: relative;
    flex: none;
    height: 100%;
}

.nav-combo .caret {
    position: absolute;
    right: 4px;
    top: 9px;
}

.nav-project {
    width: 625px;
    padding-left: 3px;
    box-sizing: border-box;
}

.nav-scope {
    width: 625px;
    margin-left: 3px;
    padding-left: 23px;
    box-sizing: border-box;
}

.nav-member {
    width: 626px;
    margin-left: 4px;
    padding-left: 4px;
    box-sizing: border-box;
    gap: 8px;
}

.splitter {
    width: 21px;
    background: #1e1e1e;
    display: flex;
    align-items: center;
    justify-content: center;
}

/* Editor */
.editor {
    flex: 1;
    display: flex;
    background: #1e1e1e;
    min-height: 0;
    overflow: hidden;
}

.margin {
    width: 52px;
    background: #333333;
    flex: none;
}

.code {
    flex: 1;
    padding-top: 1px;
    font-family: "Liberation Mono", "DejaVu Sans Mono", monospace;
    font-size: 37px;
    color: #dcdcdc;
}

.row {
    height: 50px;
    display: flex;
}

.num {
    width: 101px;
    text-align: right;
    line-height: 54px;
    color: #2b91af;
    font-size: 40px;
    font-family: "Liberation Mono", monospace;
    flex: none;
    letter-spacing: -1px;
}

.mark {
    width: 17px;
    margin-left: 66px;
    background: #ecec82;
    box-sizing: border-box;
    flex: none;
    border-bottom: 1px solid #c8c86c;
}

.mark.even {
    border-bottom: 0;
}

.fold {
    width: 35px;
    position: relative;
    flex: none;
}

.fold-box {
    position: absolute;
    left: 8px;
    top: 11px;
    width: 26px;
    height: 27px;
    box-sizing: border-box;
    border: 3px solid #999;
}

.fold-box::after {
    content: "";
    position: absolute;
    left: 4px;
    right: 4px;
    top: 9px;
    height: 3px;
    background: #ddd;
}

.fold-line::before,
.fold-end::before {
    content: "";
    position: absolute;
    left: 21px;
    top: 0;
    bottom: 0;
    width: 3px;
    background: #999;
}

.fold-end::before {
    bottom: 2px;
}

.fold-end::after {
    content: "";
    position: absolute;
    left: 21px;
    right: 0;
    bottom: 2px;
    height: 3px;
    background: #999;
}

.text {
    margin: 0;
    flex: 1;
    padding-left: 6px;
    font: inherit;
    line-height: 54px;
    letter-spacing: -2px;
    box-sizing: border-box;
    white-space: pre;
    height: 50px;
}

.guide {
    background: repeating-linear-gradient(#6e6e6e 0 10px, transparent 10px 20px) 13px 0 / 2px 100% no-repeat;
}

.current {
    border: 5px solid #464646;
    border-left-width: 3px;
    padding-left: 3px;
    line-height: 40px;
    margin-right: 2px;
}

.c-dir {
    color: #9b9b9b;
}

.c-str {
    color: #d69d85;
}

.c-key {
    color: #569cd6;
}

.c-fn {
    color: #dcdcaa;
}

.c-ret {
    color: #d8a0df;
}

.c-num {
    color: #b5cea8;
}

.scrollbar {
    width: 22px;
    background: #3e3e42;
    flex: none;
    display: flex;
    flex-direction: column;
    align-items: center;
}

.arrow-up,
.arrow-down {
    width: 0;
    height: 0;
    border: 5px solid transparent;
    flex: none;
}

.arrow-up {
    border-bottom: 7px solid #8a8a8c;
    border-top: 0;
    margin: 6px 0 6px;
}

.arrow-down {
    border-top: 7px solid #8a8a8c;
    border-bottom: 0;
    margin-bottom: 6px;
}

.scroll-track {
    flex: 1;
    width: 16px;
    position: relative;
    display: flex;
    align-items: flex-start;
    margin-right: 1px;
}

.scroll-changes {
    width: 4px;
    height: 320px;
    background: #ecec82;
    flex: none;
}

.scroll-thumb {
    width: 11px;
    height: 1026px;
    background: #686868;
    flex: none;
}

.editor-status {
    height: 19px;
    background: #424045;
    display: flex;
    align-items: center;
    flex: none;
    font-size: 14px;
    position: relative;
}

.zoom-box {
    width: 65px;
    height: 19px;
    background: #333337;
    display: flex;
    align-items: center;
    justify-content: space-between;
    padding: 0 3px 0 1px;
    box-sizing: border-box;
    margin-right: 28px;
    flex: none;
}

.no-issues {
    margin-left: 5px;
}

.arrow-left,
.arrow-right {
    width: 0;
    height: 0;
    border: 7px solid transparent;
    border-left-width: 0;
    border-right: 5px solid #5c5c60;
    margin-left: 59px;
    flex: none;
}

.arrow-right {
    border-right-width: 0;
    border-left: 5px solid #5c5c60;
    margin-left: 1388px;
}

.caret-info {
    display: flex;
    position: absolute;
    left: 1725px;
    gap: 24px;
    color: #ddd;
    white-space: nowrap;
}

.bottom-tabs {
    height: 35px;
    display: flex;
    gap: 14px;
    flex: none;
    font-size: 14px;
    align-items: flex-start;
}

.bottom-tabs span {
    height: 34px;
    line-height: 28px;
    box-sizing: border-box;
    border-bottom: 6px solid #3e3e42;
}

.sidetabs {
    width: 38px;
    padding: 15px 0 0 8px;
    box-sizing: border-box;
    display: flex;
    flex-direction: column;
    align-items: flex-start;
    gap: 14px;
    font-size: 14px;
    color: #bbb;
}

.sidetabs span {
    writing-mode: vertical-rl;
    text-orientation: sideways;
    line-height: 18px;
    white-space: nowrap;
}

/* Status bar */
.statusbar {
    height: 25px;
    background: #007acc;
    color: #e8f2fa;
    display: flex;
    align-items: center;
    flex: none;
    font-size: 14px;
    margin-right: 2px;
}

.ready-box {
    width: 12px;
    height: 12px;
    border: 1px solid #e8f2fa;
    border-left: 0;
    box-sizing: border-box;
}

.ready {
    margin-left: 11px;
}

.status-right {
    margin-left: auto;
    display: flex;
    align-items: center;
    gap: 8px;
}

.caret-up {
    width: 0;
    height: 0;
    border: 4px solid transparent;
    border-bottom: 6px solid #e8f2fa;
    border-top: 0;
    margin-left: 3px;
}

.bell {
    margin-left: 19px;
}

.resize-grip {
    width: 9px;
    height: 12px;
    margin: 8px 2px 0 22px;
    background-image: radial-gradient(#9cc9ea 1px, transparent 1.200px);
    background-size: 3px 3px;
}

.status-strip {
    height: 5px;
    background: #1e5a8c;
    flex: none;
}

/* Taskbar */
.taskbar {
    height: 45px;
    display: flex;
    align-items: center;
    background: linear-gradient(#1c2d3f, #1a2a3a);
    flex: none;
    overflow: hidden;
}

.start {
    margin-left: 18px;
    margin-right: 17px;
}

.search-box {
    width: 324px;
    height: 45px;
    box-sizing: border-box;
    background: #f2f1f4;
    border-top: 1px solid #ddd;
    display: flex;
    align-items: center;
    padding-left: 14px;
    gap: 13px;
    color: #222;
    font-size: 17px;
    flex: none;
    position: relative;
}

.melon {
    position: absolute;
    right: 11px;
    top: 4px;
}

.task-icons {
    display: flex;
}

.task-icon {
    width: 55.200px;
    height: 45px;
    display: flex;
    align-items: center;
    justify-content: center;
    position: relative;
    flex: none;
    padding-bottom: 3px;
    box-sizing: border-box;
}

.task-icon.open::after {
    content: "";
    position: absolute;
    left: 5px;
    right: 5px;
    bottom: 0;
    height: 3px;
    background: #76b9ed;
}

.task-icon.part::after {
    background: linear-gradient(90deg, #76b9ed 80%, #4f88b4 80%);
}

.ico-txt {
    font-family: "Liberation Sans", sans-serif;
    font-weight: bold;
    text-anchor: middle;
}

.vs-purple {
    color: #8a4fd0;
}

.vs-dark {
    color: #6a46a8;
}

.vs-light {
    color: #b388ea;
}

.vs-blue {
    color: #1f8ad2;
}

/* Notepad */
.notepad {
    flex: 1;
    display: flex;
    flex-direction: column;
    background: #fff;
    border-top: 1px solid #5b8fb5;
    box-sizing: border-box;
    min-width: 0;
}

.np-title {
    height: 35px;
    display: flex;
    align-items: center;
    padding-left: 10px;
    gap: 2px;
    flex: none;
}

.np-name {
    font-size: 14px;
    color: #8a8a8a;
    white-space: nowrap;
    margin-left: 2px;
}

.np-buttons {
    margin-left: auto;
    display: flex;
    align-items: center;
    gap: 41px;
    padding-right: 26px;
}

.np-min {
    width: 11px;
    height: 1px;
    background: #666;
}

.np-max {
    width: 11px;
    height: 15px;
    border: 1px solid #666;
    box-sizing: border-box;
}

.np-menu {
    height: 21px;
    display: flex;
    align-items: center;
    gap: 15.500px;
    padding-left: 9px;
    font-size: 14px;
    color: #777;
    flex: none;
    border-bottom: 2px solid #f2f2f2;
}

.np-body {
    flex: 1;
    display: flex;
    min-height: 0;
}

.np-text {
    flex: 1;
    margin: 0;
    padding: 0 0 0 8px;
    font-family: "Liberation Sans", "Noto Sans CJK KR", sans-serif;
    font-size: 27.700px;
    line-height: 36px;
    color: #111;
    overflow: hidden;
}

.ko {
    font-family: "Noto Sans CJK KR", sans-serif;
    font-size: 29px;
    line-height: 0;
}

.np-scroll {
    width: 18px;
    background: #f0f0f0;
    display: flex;
    flex-direction: column;
    flex: none;
    position: relative;
}

.np-up,
.np-down {
    height: 8px;
    width: 8px;
    border-left: 2px solid #606060;
    border-top: 2px solid #606060;
    transform: rotate(45deg);
    margin: 8px 0 0 5px;
    box-sizing: border-box;
}

.np-down {
    transform: rotate(225deg);
    margin: auto 0 12px 5px;
}

.np-thumb {
    height: 986px;
    margin: 254px 0 0 0;
    background: #cdcdcd;
}

.np-edge {
    width: 7px;
    background: #0f6cb8;
    flex: none;
}

.np-status {
    height: 11px;
    background: #f0eff1;
    border-top: 2px solid #dcdcdc;
    box-sizing: border-box;
    display: flex;
    overflow: hidden;
    font-size: 14px;
    color: #333;
    flex: none;
}

.np-status span {
    box-sizing: border-box;
    border-left: 1px solid #dcdcdc;
    padding: 2px 0 0 10px;
    white-space: nowrap;
    line-height: 18px;
}

.np-pos {
    margin-left: 445px;
    width: 157px;
}

.np-zoom {
    width: 56px;
}

.np-eol {
    width: 135px;
}

.np-enc {
    flex: 1;
}

/* Bottom captions */
.caption-area {
    height: 98px;
    background: linear-gradient(#14181b 81px, #17130f 81px);
    padding-left: 2201px;
    padding-top: 63px;
    box-sizing: border-box;
    overflow: hidden;
}

.speak-box {
    width: 455px;
    height: 80px;
    box-sizing: border-box;
    background: #14181b;
    border: 4px solid #0d0f10;
    padding: 12px 0 0 50px;
    color: #fff;
    font-size: 28px;
    line-height: 40px;
}

/* Pen layer */
.ink {
    position: absolute;
    left: 0;
    top: 0;
    pointer-events: none;
}

.ink path {
    fill: none;
    stroke: #f5161c;
    stroke-width: 4px;
    stroke-linecap: round;
    stroke-linejoin: round;
    vector-effect: non-scaling-stroke;
}

.ink .pen-mid path {
    stroke-width: 4.500px;
}

.ink .pen-wide path {
    stroke-width: 5px;
}

.ink .pen-mid .thick {
    stroke-width: 7px;
}

.ink .pen-mid .pencil {
    stroke: #8a8a8a;
    stroke-width: 2px;
}

.ink .dot {
    stroke-width: 3px;
}
```
